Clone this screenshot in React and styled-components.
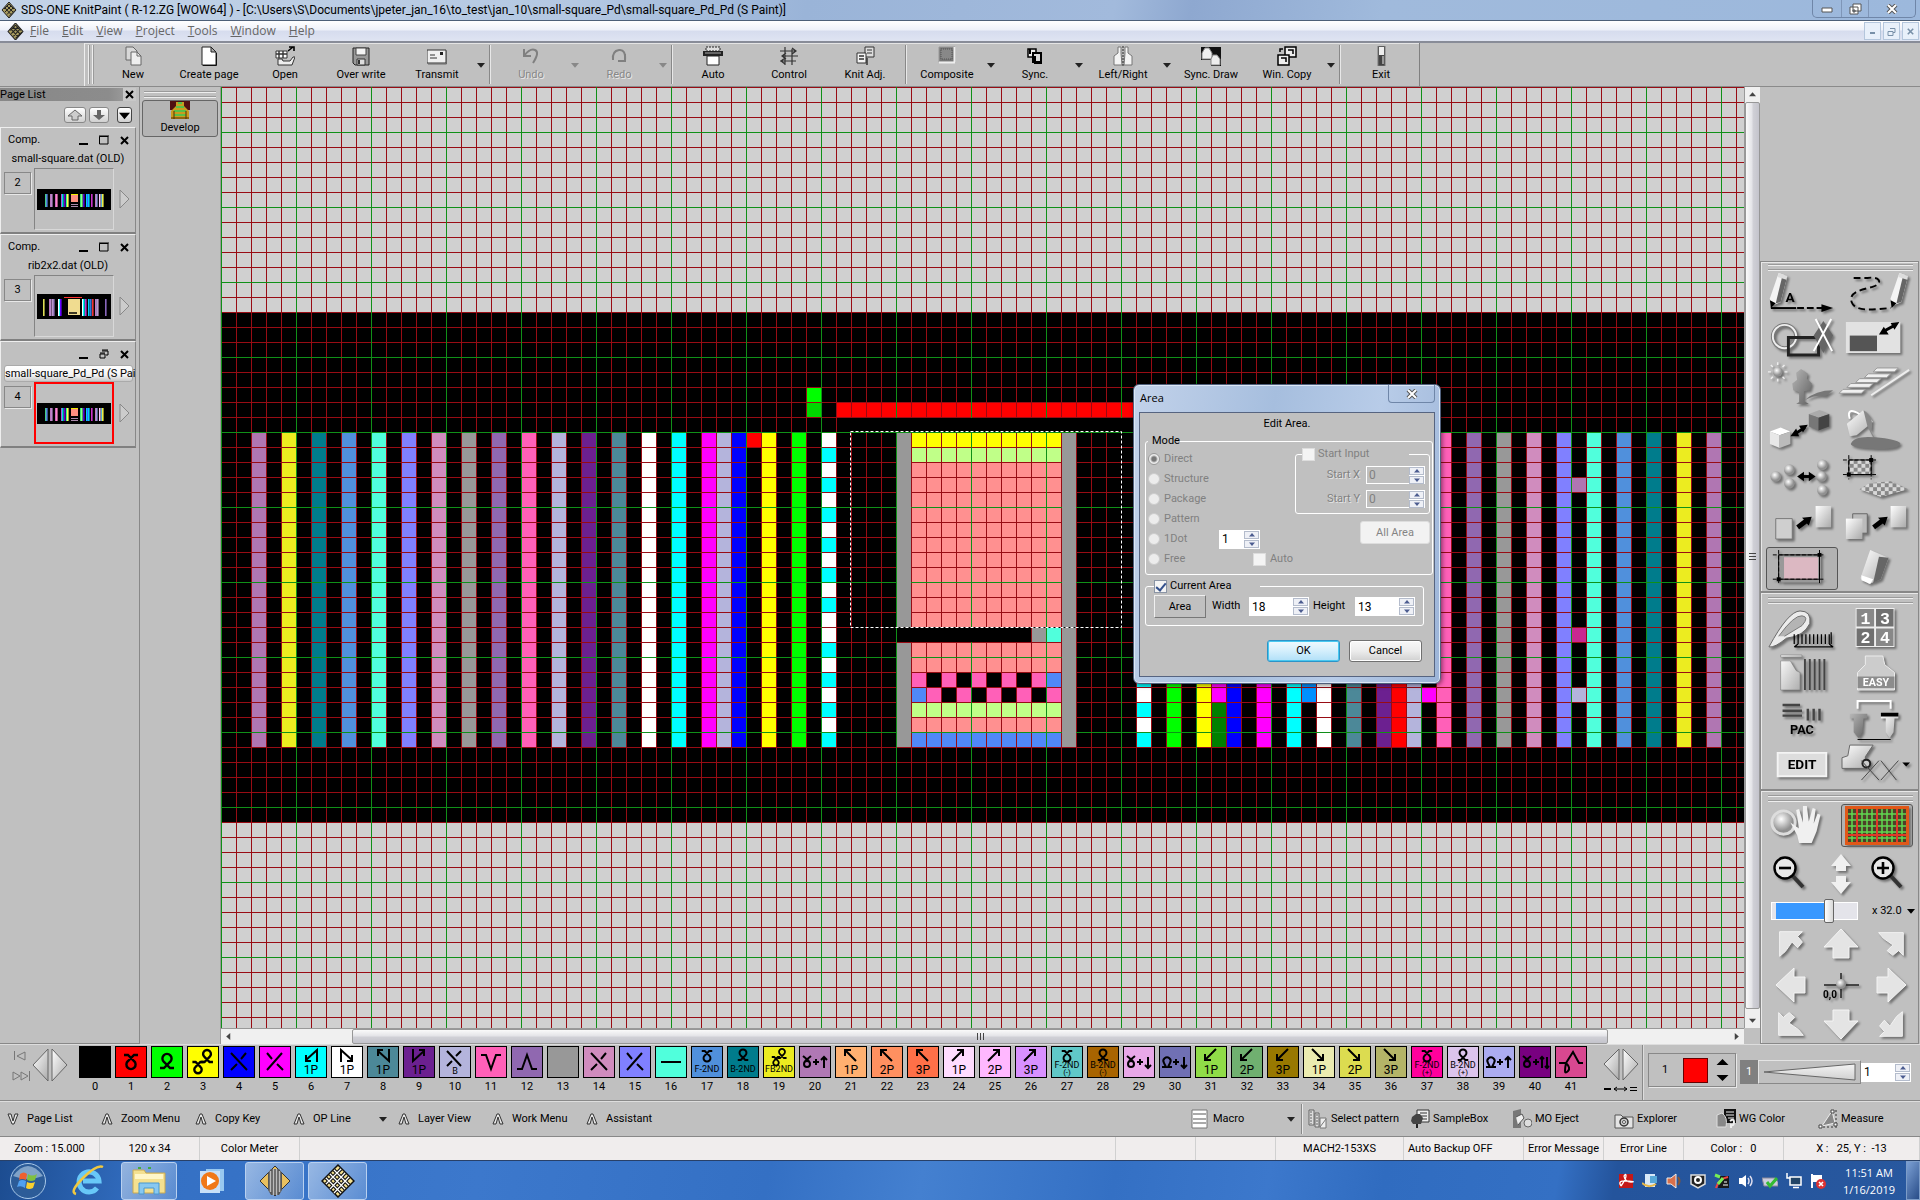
import React from "react";
import styled, { createGlobalStyle, css } from "styled-components";

const Global = createGlobalStyle`
  * { box-sizing: border-box; }
  html, body { margin: 0; padding: 0; }
  body { background: #c0c0c0; color: #000; font: 11px/14px Roboto, "Liberation Sans", sans-serif; overflow: hidden; }
  button, input { font: inherit; color: inherit; margin: 0; padding: 0; }
  button { background: none; border: 0; cursor: default; white-space: nowrap; }
  svg { display: block; }
`;

/* ---------- shell ---------- */
const Shell = styled.div`
  display: flex;
  flex-direction: column;
  min-height: 100vh;
`;
const TitleBar = styled.header`
  display: flex;
  height: 21px;
  padding-left: 1px;
  gap: 4px;
  align-items: center;
  background: linear-gradient(100deg, #c3d3e8 0, #b4c8e2 30%, #9ab4d8 42%, #a2badc 58%, #8ea8d0 62%, #a0badc 72%, #9cb8dc 100%);
  border-bottom: 1px solid #4d6078;
`;
const TitleText = styled.h1`
  margin: 0;
  font: 12px/18px Roboto, "Open Sans", sans-serif;
  white-space: nowrap;
  flex: 1;
`;
const WindowButtons = styled.div`
  display: flex;
  align-self: flex-start;
  margin-right: 4px;
  height: 18px;
  border: 1px solid #6f86a8;
  border-top: 0;
  border-radius: 0 0 5px 5px;
`;
const WindowButton = styled.button`
  width: ${(p) => p.$w}px;
  display: grid;
  place-items: center;
  & + & { border-left: 1px solid #7f96b8; }
`;
const MenuBar = styled.nav`
  display: flex;
  align-items: center;
  height: 22px;
  padding-left: 7px;
  background: linear-gradient(#fff, #eef1f9 45%, #d6dcee 50%, #dfe4f2);
  border-bottom: 2px solid #888c98;
`;
const MenuItem = styled.button`
  font: 12px/18px "Open Sans", sans-serif;
  color: #666;
  padding: 0 7px 0 6px;
`;
const MdiButtons = styled.div`
  display: flex;
  gap: 2px;
  margin-left: auto;
  margin-right: 1px;
`;
const MdiButton = styled.button`
  width: 17px;
  height: 18px;
  display: grid;
  place-items: center;
  border: 1px solid #b4c6dc;
  background: #e8f0fa;
`;

/* ---------- toolbar ---------- */
const ToolbarRow = styled.div`
  height: 44px;
  padding-left: 84px;
  display: flex;
  background: #c0c0c0;
  border-bottom: 1px solid #8a8a8a;
`;
const Toolbar = styled.div`
  display: flex;
  align-items: stretch;
  border-left: 1px solid #eee;
  border-right: 1px solid #808080;
  box-shadow: inset 0 1px #e4e4e4;
`;
const Grip = styled.span`
  width: 6px;
  margin: 2px 1px 2px 3px;
  border-left: 2px ridge #eee;
  border-right: 2px ridge #eee;
`;
const Tool = styled.button`
  width: 76px;
  padding-top: 3px;
  display: flex;
  flex-direction: column;
  align-items: center;
  gap: 2px;
  line-height: 14px;
  ${(p) => p.$off && css`color: #888; text-shadow: 1px 1px #e8e8e8;`}
`;
const DropArrow = styled.button`
  width: 12px;
  margin-right: ${(p) => p.$after || 0}px;
  display: grid;
  place-items: center;
  color: ${(p) => (p.$off ? "#888" : "#222")};
`;
const Divider = styled.span`
  width: 2px;
  margin: ${(p) => (p.$wide ? "2px 5px 2px 4px" : "2px")};
  border-left: 1px solid #888;
  border-right: 1px solid #e8e8e8;
`;

/* ---------- work area ---------- */
const Work = styled.main`
  flex: 1;
  display: flex;
  min-height: 0;
`;
const PagePanel = styled.aside`
  width: 140px;
  border-right: 1px solid #888;
  border-bottom: 1px solid #888;
  padding: 1px 3px 0 0;
`;
const PageHead = styled.div`
  display: flex;
  height: 13px;
  align-items: center;
  justify-content: space-between;
  background: linear-gradient(90deg, #888, #8c8c8c 80%, #a4a4a4);
  line-height: 13px;
`;
const PageClose = styled.button`
  width: 13px;
  height: 13px;
  display: grid;
  place-items: center;
  background: #c8c8c8;
`;
const PageNav = styled.div`
  display: flex;
  height: 26px;
  padding: 6px 4px 4px 64px;
  gap: 3px;
`;
const PageNavButton = styled.button`
  width: ${(p) => p.$w}px;
  margin-left: ${(p) => (p.$last ? 5 : 0)}px;
  display: grid;
  place-items: center;
  border: 1px solid ${(p) => (p.$last ? "#444" : "#888")};
  border-radius: 3px;
  background: linear-gradient(#fff, #d0d0d0);
`;
const PageCard = styled.section`
  height: 107px;
  padding: 1px 4px;
  border-top: 1px solid #eee;
  border-left: 1px solid #eee;
  border-right: 1px solid #888;
  border-bottom: 2px solid #808080;
`;
const CardBar = styled.div`
  display: flex;
  align-items: center;
  height: 22px;
  padding: 0 2px 0 3px;
  gap: 11px;
  > span { flex: 1; }
`;
const CardName = styled.div`
  height: 17px;
  line-height: 15px;
  text-align: center;
  white-space: nowrap;
  ${(p) => p.$active && css`
    text-align: left;
    margin: 0 -2px 0 -1px;
    border: 1px solid #aaa;
    border-radius: 3px;
    background: linear-gradient(#fff, #f4f4f4 60%, #c8c8c8);
  `}
`;
const CardBody = styled.div`
  display: flex;
  gap: 3px;
  align-items: flex-start;
  margin-left: -1px;
`;
const PageNo = styled.button`
  width: 27px;
  height: 22px;
  margin-top: 4px;
  border: 1px solid #888;
  box-shadow: 1px 1px #e8e8e8;
`;
const Thumb = styled.div`
  width: 80px;
  height: 62px;
  display: grid;
  place-items: center;
  border: ${(p) => (p.$active ? "2px solid #f00" : "1px inset #d8d8d8")};
`;
const Play = styled.button`
  align-self: center;
  padding-left: 2px;
`;
const DevelopPanel = styled.aside`
  width: 81px;
  border-right: 1px solid #999;
  padding: 4px 2px 0;
`;
const HGrip = styled.div`
  height: 7px;
  border-top: 2px groove #eee;
  border-bottom: 2px groove #eee;
  margin: 0 2px ${(p) => p.$after || 0}px;
`;
const DevelopButton = styled.button`
  width: 76px;
  height: 37px;
  display: flex;
  flex-direction: column;
  align-items: center;
  gap: 2px;
  background: #b4b4b4;
  border: 1px solid #666;
  border-radius: 3px;
`;
const CanvasColumn = styled.div`
  flex: 1;
  min-width: 0;
  display: flex;
  flex-direction: column;
`;
const CanvasRow = styled.div`
  flex: 1;
  display: flex;
  min-height: 0;
`;
const Canvas = styled.div`
  position: relative;
  flex: 1;
  overflow: hidden;
  background: #d0d0d0;
  > svg { position: absolute; inset: 0; }
`;
const Scroll = styled.div`
  display: flex;
  flex-direction: ${(p) => (p.$v ? "column" : "row")};
  ${(p) => (p.$v ? "width: 16px;" : "height: 16px; margin-right: 16px;")}
  background: #f0f0f0;
  border: 0 solid #999;
  ${(p) => (p.$v ? "border-left-width: 1px;" : "border-top-width: 1px;")}
`;
const ScrollEnd = styled.button`
  flex: none;
  width: 15px;
  height: 15px;
  display: grid;
  place-items: center;
`;
const ScrollGap = styled.span`flex: ${(p) => p.$n} 1 0;`;
const ScrollThumb = styled.div`
  flex: ${(p) => p.$n} 1 0;
  display: grid;
  place-items: center;
  border: 1px solid #979797;
  border-radius: 2px;
  background: linear-gradient(${(p) => (p.$v ? "90deg" : "180deg")}, #fafafa, #e4e4e8 45%, #d0d0d6 55%, #c4c4cc);
`;

/* ---------- tool palette ---------- */
const ToolPanel = styled.aside`
  width: 160px;
  padding-right: 1px;
  display: flex;
  flex-direction: column;
  justify-content: flex-end;
`;
const ToolSection = styled.section`
  border: 1px solid #888;
  box-shadow: inset 1px 1px #e8e8e8;
  padding: ${(p) => p.$pt}px 3px ${(p) => p.$pb}px 5px;
`;
const ToolGrid = styled.div`
  display: grid;
  grid-template-columns: 72px 72px;
  gap: 3px;
`;
const PaintTool = styled.button`
  height: 43px;
  border: 1px solid ${(p) => (p.$on ? "#555" : "transparent")};
  border-radius: 3px;
  background: ${(p) => (p.$on ? "#b2b2b2" : "none")};
  display: grid;
  place-items: center;
  > svg { filter: drop-shadow(2px 2px 1px #707070); overflow: visible; }
`;
const ZoomRow = styled.div`
  display: grid;
  grid-template-columns: 50px 50px ${(p) => p.$last || 50}px;
  grid-template-rows: 100%;
  align-items: center;
  height: ${(p) => p.$h}px;
`;
const ZoomLine = styled.div`
  display: flex;
  align-items: center;
  height: 24px;
  padding-left: 5px;
  gap: 14px;
`;
const ZoomSlider = styled.input`
  appearance: none;
  flex: none;
  width: 87px;
  height: 18px;
  margin: 0;
  border: 1px solid #fff;
  background: linear-gradient(90deg, #e4e4ea 4px, #3898ff 4px, #3898ff 62%, #e4e4ea 62%);
  &::-webkit-slider-thumb {
    appearance: none;
    width: 10px;
    height: 24px;
    border: 1px solid #666;
    border-radius: 2px;
    background: linear-gradient(90deg, #fff, #d8d8d8);
  }
`;
const ZoomValue = styled.button`
  display: flex;
  align-items: center;
  gap: 5px;
`;

/* ---------- area dialog ---------- */
const Dialog = styled.section`
  position: absolute;
  left: 912px;
  top: 297px;
  width: 308px;
  padding: 0 5px 6px;
  border: 1px solid #50607c;
  border-radius: 6px;
  background: linear-gradient(100deg, #c2d2ea, #a6bede 40%, #b8cce8 70%, #9cb4d8);
  box-shadow: inset 0 0 0 1px #dce8f6, 1px 1px 5px #0008;
`;
const DialogHead = styled.div`
  display: flex;
  justify-content: space-between;
  height: 27px;
  padding-left: 1px;
  h2 { margin: 0; font: 11px/26px "Open Sans", sans-serif; }
`;
const DialogClose = styled.button`
  width: 47px;
  height: 18px;
  display: grid;
  place-items: center;
  border: 1px solid #6f86a8;
  border-top: 0;
  border-radius: 0 0 4px 4px;
`;
const DialogBody = styled.div`
  border: 1px solid #566480;
  background: #c0c0c0;
  padding-bottom: 14px;
`;
const DialogCaption = styled.div`
  text-align: center;
  line-height: 22px;
`;
const Group = styled.fieldset`
  min-width: 0;
  margin: ${(p) => p.$m};
  padding: ${(p) => p.$p};
  border: 1px solid #fff;
  border-radius: 3px;
`;
const Legend = styled.legend`
  display: flex;
  align-items: center;
  gap: 3px;
  width: ${(p) => p.$w};
  height: 12px;
  padding: 0 0 0 ${(p) => p.$pl || 0}px;
  line-height: 12px;
  color: ${(p) => (p.$off ? "#808080" : "#000")};
`;
const ModeColumns = styled.div`
  display: grid;
  grid-template-columns: 1fr 135px;
`;
const Modes = styled.div`padding-top: 2px;`;
const StartColumn = styled.div`padding-top: 1px;`;
const ModeRow = styled.div`
  display: flex;
  align-items: center;
  height: 20px;
  color: #808080;
`;
const ModeLabel = styled.label`
  display: flex;
  align-items: center;
  gap: 4px;
  width: ${(p) => p.$w || 71}px;
`;
const Radio = styled.input`
  appearance: none;
  width: 12px;
  height: 12px;
  margin: 0;
  border-radius: 50%;
  border: 1px solid #ccc;
  background: #ececec;
  &:checked {
    border-color: #999;
    background: radial-gradient(#777 0 2px, #ececec 4px);
  }
`;
const Check = styled.input`
  appearance: none;
  flex: none;
  width: 13px;
  height: 13px;
  margin: 0;
  border: 1px solid ${(p) => (p.disabled ? "#ddd" : "#8a94a4")};
  background: #f4f4f4;
  display: grid;
  place-items: center;
  &:checked::after {
    content: "";
    width: 4px;
    height: 8px;
    border: solid #33508c;
    border-width: 0 2px 2px 0;
    transform: rotate(40deg);
  }
`;
const SpinBox = styled.span`
  display: flex;
  flex: none;
  width: ${(p) => p.$w}px;
  height: ${(p) => p.$h || 19}px;
  border: 1px solid #fff;
  background: ${(p) => (p.$off ? "#c0c0c0" : "#fff")};
  color: ${(p) => (p.$off ? "#808080" : "#000")};
`;
const SpinInput = styled.input`
  flex: 1;
  min-width: 0;
  border: 0;
  padding-left: 2px;
  background: transparent;
  font-size: 12px;
`;
const SpinButtons = styled.span`
  display: flex;
  flex-direction: column;
  width: 15px;
  gap: 1px;
  background: #fff;
`;
const SpinButton = styled.button`
  flex: 1;
  display: grid;
  place-items: center;
  border: 1px solid #b4bccc;
  background: #eef0f6;
  color: #4c5c90;
`;
const StartRow = styled.label`
  display: flex;
  justify-content: flex-end;
  align-items: center;
  gap: 6px;
  color: #808080;
  text-shadow: 1px 1px #e4e4e4;
  & + & { margin-top: 6px; }
`;
const AllArea = styled.button`
  display: block;
  width: 70px;
  height: 23px;
  margin: 7px 0 0 auto;
  border: 1px solid #ddd;
  border-radius: 3px;
  background: #f2f2f2;
  color: #848484;
`;
const AreaRow = styled.div`
  display: flex;
  align-items: center;
`;
const FieldLabel = styled.label`
  width: ${(p) => p.$w}px;
  padding: 0 0 2px ${(p) => p.$pl}px;
  flex: none;
`;
const AreaButton = styled.button`
  width: 52px;
  height: 23px;
  border: 1px solid #f0f0f0;
  border-right-color: #777;
  border-bottom-color: #777;
`;
const DialogActions = styled.div`
  display: flex;
  justify-content: flex-end;
  gap: 9px;
  margin: 14px 12px 0 0;
`;
const ActionButton = styled.button`
  width: 73px;
  height: 22px;
  border: 1px solid ${(p) => (p.$main ? "#2c94c8" : "#707070")};
  border-radius: 3px;
  background: ${(p) => (p.$main ? "linear-gradient(#f0fafe, #d4effc 50%, #b0e0f8)" : "linear-gradient(#f8f8f8, #ececec 50%, #d0d0d0)")};
  box-shadow: inset 0 0 0 1px ${(p) => (p.$main ? "#48c8f0" : "#fff")};
`;

/* ---------- colour palette ---------- */
const PaletteBar = styled.section`
  display: flex;
  height: 58px;
  border-bottom: 2px groove #ddd;
  border-top: 1px solid #ddd;
`;
const PaletteStep = styled.div`
  width: 79px;
  padding: 4px 0 0 12px;
`;
const Swatches = styled.div`
  display: flex;
  gap: 4px;
  padding-top: 1px;
`;
const SwatchButton = styled.button`
  width: 32px;
  display: flex;
  flex-direction: column;
  gap: 2px;
  text-align: center;
  > span { line-height: 14px; }
`;
const Chip = styled.span`
  display: block;
  height: 32px;
  border: 1px solid #000;
  background: ${(p) => p.$c};
`;
const PaletteWidth = styled.div`
  width: 57px;
  padding: 3px 0 0 16px;
  border-right: 2px groove #ddd;
`;
const ColorBox = styled.div`
  display: flex;
  align-items: center;
  justify-content: space-between;
  width: 88px;
  height: 34px;
  margin: 8px 4px;
  padding: 0 6px 0 13px;
  border: 1px solid #888;
  box-shadow: 1px 1px #e8e8e8;
`;
const CurrentColor = styled.span`
  width: 25px;
  height: 25px;
  margin-left: 6px;
  border: 1px solid #600;
  background: #f00;
`;
const PenBox = styled.div`
  display: flex;
  align-items: center;
  height: 24px;
  margin-top: 15px;
  flex: 1;
  padding-right: 9px;
`;
const PenNo = styled.span`
  width: 18px;
  height: 24px;
  line-height: 24px;
  text-align: center;
  color: #fff;
  background: #808080;
`;
const PenWedge = styled.div`
  flex: 1;
  height: 24px;
  display: grid;
  place-items: center;
  border: 1px solid #e4e4e4;
  border-right-color: #888;
  border-bottom-color: #888;
`;

/* ---------- bottom bars ---------- */
const FunctionBar = styled.nav`
  display: flex;
  height: 34px;
  padding-left: 7px;
`;
const FnButton = styled.button`
  display: flex;
  align-items: center;
  gap: ${(p) => p.$gap || 8}px;
  width: ${(p) => p.$w}px;
  text-align: left;
`;
const Spring = styled.span`flex: 1;`;
const StatusBar = styled.footer`
  display: flex;
  height: 25px;
  background: #f0eded;
  border-top: 1px solid #888;
  border-bottom: 1px solid #284068;
`;
const StatusCell = styled.span`
  ${(p) => (p.$w ? `width: ${p.$w}px;` : "flex: 1;")}
  border-right: 1px solid #d0d0d0;
  padding-left: ${(p) => (p.$left ? 4 : 0)}px;
  text-align: ${(p) => (p.$left ? "left" : "center")};
  line-height: 23px;
  white-space: pre;
`;
const Taskbar = styled.div`
  display: flex;
  align-items: center;
  height: 39px;
  color: #fff;
  background: linear-gradient(100deg, #1c4c90 0, #3470c4 8%, #3c78cc 25%, #3470c4 40%, #4480d0 48%, #3470c4 58%, #3c78cc 66%, #306cc0 72%, #3470c4 81%, #24549c 84%, #28589f 100%);
`;
const TaskButton = styled.button`
  width: ${(p) => p.$w}px;
  height: 38px;
  margin-right: ${(p) => p.$mr || 0}px;
  display: grid;
  place-items: center;
  ${(p) => p.$open && css`
    border: 1px solid #b8d0f0;
    border-radius: 3px;
    background: linear-gradient(120deg, #d0e0f4a0, #7ca4dc80);
  `}
`;
const Tray = styled.div`
  display: flex;
  align-items: center;
  margin-left: auto;
`;
const TrayButton = styled.button`
  width: 24px;
  display: grid;
  place-items: center;
`;
const Clock = styled.time`
  width: 76px;
  padding-left: 2px;
  text-align: center;
  font: 11px/17px "Open Sans", sans-serif;
`;
const ShowDesktop = styled.button`
  width: 14px;
  height: 39px;
  border: 1px solid #7c9cc8;
  background: linear-gradient(120deg, #7ca0d4, #284c88);
`;

/* ---------- small glyphs ---------- */
const Tri = ({ d = "down", s = 6, c = "currentColor" }) => (
  <svg width={s} height={s} viewBox="0 0 6 6" fill={c}>
    <path d={{ down: "M0 1.5H6L3 5Z", up: "M0 4.5H6L3 1Z", left: "M4.5 0V6L1 3Z", right: "M1.5 0V6L5 3Z" }[d]} />
  </svg>
);
const Ex = ({ s = 9, c = "#000", w = 2 }) => (
  <svg width={s} height={s} viewBox="0 0 9 9" stroke={c} strokeWidth={w}><path d="M1 1 8 8M8 1 1 8" /></svg>
);
const GripMarks = ({ v }) => (
  <svg width="8" height="8" stroke="#444"><path d={v ? "M0 1.5H7M0 4.5H7M0 7.5H7" : "M1.5 0V7M4.5 0V7M7.5 0V7"} /></svg>
);
const Logo = ({ s = 16 }) => (
  <svg width={s} height={s} viewBox="0 0 32 32">
    <path d="M16 0 30 16 16 32 2 16Z" fill="#a89c60" stroke="#222" strokeWidth="2" />
    <path d="M6 14 16 4M8 20 20 8M12 25 24 12M16 29 28 17M26 14 16 4M24 20 12 8M20 25 8 12" stroke="#222" strokeWidth="2" />
  </svg>
);
const Defs = () => (
  <svg width="0" height="0" style={{ position: "absolute" }} aria-hidden="true">
    <defs>
      <linearGradient id="lt" x1="0" y1="0" x2="1" y2="1"><stop stopColor="#fff" /><stop offset="1" stopColor="#aaa" /></linearGradient>
      <linearGradient id="arrow" x1="0" y1="0" x2="0" y2="1"><stop stopColor="#f4f4f4" /><stop offset="1" stopColor="#d0d0d0" /></linearGradient>
      <linearGradient id="md" x1="0" y1="0" x2="1" y2="1"><stop stopColor="#b8b8b8" /><stop offset="1" stopColor="#606060" /></linearGradient>
      <radialGradient id="ball" cx=".4" cy=".35"><stop stopColor="#fff" /><stop offset="1" stopColor="#909090" /></radialGradient>
      <pattern id="chk" width="8" height="8" patternUnits="userSpaceOnUse"><rect width="8" height="8" fill="#d8d8d8" /><path d="M0 0h4v4H0zM4 4h4v4H4z" fill="#888" /></pattern>
    </defs>
  </svg>
);

const barIcons = {
  New: <><path d="M3 1H10L14 5V14H3Z" fill="#d8d8d8" stroke="#666" /><path d="M8 6H14L18 10V19H8Z" fill="#eee" stroke="#666" /><path d="M14 6V10H18" fill="none" stroke="#666" /></>,
  "Create page": <><path d="M3 1H12L17 6V19H3Z" fill="#fff" stroke="#222" /><path d="M12 1V6H17Z" fill="#aaa" stroke="#222" /><path d="M17.5 7V19.5H4" fill="none" stroke="#111" /></>,
  Open: <><path d="M1 5H12V12H1Z" fill="#fff" stroke="#333" /><path d="M4 5V12M8 5V12M1 8H12" stroke="#333" strokeWidth="1.4" /><path d="M3 19V13H7L8 15H15L18 11H20L17 19Z" fill="#eee" stroke="#333" /><path d="M13 5 18 1M14 1H19V5" fill="none" stroke="#000" strokeWidth="1.6" /></>,
  "Over write": <><path d="M2 2H18V19H4L2 17Z" fill="#999" stroke="#222" /><path d="M5 2H15V9H5Z" fill="#f4f4f4" stroke="#444" /><path d="M6 13H14V19H6Z" fill="#ddd" stroke="#333" /><path d="M8 14V18" stroke="#333" strokeWidth="2" /></>,
  Transmit: <><path d="M0 4H19V17H0Z" fill="#f0f0f0" stroke="#333" /><path d="M3 9H8M3 12H10" stroke="#333" /><path d="M13 6H16V9H13Z" fill="#222" /><path d="M19.5 5V18H1" fill="none" stroke="#666" /></>,
  Undo: <path d="M3 3V10H10M3 10Q9 2 14 4T12 17" fill="none" stroke="#808080" strokeWidth="2" />,
  Redo: <path d="M16 8V15H9M16 15Q17 3 10 4T4 14" fill="none" stroke="#808080" strokeWidth="2" />,
  Auto: <><path d="M3 1H17V5H3Z" fill="#ddd" stroke="#222" strokeDasharray="2 1" /><path d="M0 5H20V10H0Z" fill="#222" /><path d="M2 7H18" stroke="#aaa" /><path d="M4 10H16V19H4Z" fill="#fff" stroke="#222" /></>,
  Control: <path d="M1 5H17M13 2 17 5 13 8M19 10H3M7 7 3 10 7 13M1 15H17M6 12 2 15 6 18M6 1V19M13 3V19" fill="none" stroke="#333" strokeWidth="1.2" />,
  "Knit Adj.": <><path d="M10 1H19V11H10Z" fill="#ddd" stroke="#333" /><path d="M12 4H17M12 7H17" stroke="#333" /><path d="M2 7H11V17H2Z" fill="#f4f4f4" stroke="#333" /><path d="M4 10H9M4 13H9M12 12V19" stroke="#333" strokeWidth="1.5" /></>,
  Composite: <><path d="M2 1H18V16H2Z" fill="#777" stroke="#999" /><path d="M2 16.500H18M17.500 1V16" stroke="#eee" strokeWidth="2" /><path d="M4 3H15V13H4Z" fill="#888" stroke="#555" strokeDasharray="1 1" /></>,
  "Sync.": <><path d="M3 3H11V11H3Z" fill="#eee" stroke="#000" strokeWidth="1.5" /><path d="M5 3V8M8 7H16V16H8Z" fill="#ddd" stroke="#000" strokeWidth="2" /><path d="M10 10V17H17" fill="none" stroke="#000" strokeWidth="2" /></>,
  "Left/Right": <><path d="M5 1H8V7L9 19H1V10L5 7Z" fill="#f4f4f4" stroke="#777" /><path d="M15 1H12V7L11 19H19V10L15 7Z" fill="#f4f4f4" stroke="#777" /><path d="M10 0V20" stroke="#222" strokeDasharray="2 1" /></>,
  "Sync. Draw": <><path d="M0 1H12V12H20V20H10V14H0Z" fill="#111" /><path d="M12 1H20V20H12Z" fill="#111" /><path d="M4 2H8L11 7V13H1V7Z" fill="#eee" stroke="#888" /><path d="M12 9H16L19 13V19H10V13Z" fill="#eee" stroke="#888" /></>,
  "Win. Copy": <><path d="M8 1H19V11H8Z" fill="#eee" stroke="#000" strokeWidth="1.5" /><path d="M1 9H12V19H1Z" fill="#eee" stroke="#000" strokeWidth="1.5" /><path d="M11 4H16V8M4 12H9V16M3 6V3H6" fill="none" stroke="#000" strokeWidth="1.5" /></>,
  Exit: <><path d="M7 0H14V20H7Z" fill="#444" stroke="#777" /><path d="M8 1H13V9H8Z" fill="#eee" /><path d="M12 10V18" stroke="#999" strokeWidth="2" /></>,
};
const toolbarItems = ["New", "Create page", "Open", "Over write", "Transmit>", "|", "Undo>-", "Redo>-", "|", "Auto", "Control", "Knit Adj.", "|", "Composite>", "Sync.>", "Left/Right>", "Sync. Draw", "Win. Copy>", "|", "Exit"];

/* ---------- knit pattern ---------- */
const CELL = 15;
const C = { mauve: "#b076b2", yel: "#ecec20", teal: "#007c8c", sky: "#5090dc", aqua: "#50ffdc", peri: "#8080ff", rose: "#d08cbe", gray: "#989898", vio: "#9068b0", pink: "#ff60b8", lav: "#b4b4dc", pur: "#6c2090", slate: "#4c8898" };
const ROWS = 21;
const bars = [
  [2, C.mauve], [4, C.yel], [6, C.teal], [8, C.sky], [10, C.aqua], [12, C.peri], [14, C.rose], [16, C.gray], [18, C.vio], [20, C.pink], [22, C.lav], [24, C.pur], [26, C.slate], [28, "#fff"], [30, "#0ff"], [32, "#f0f"], [33, C.lav], [34, "#00f"], [36, "#ff0"], [38, "#0f0"],
  [63, "#0f0"], [65, "#ff0"], [66, "#f0f"], [67, "#00f"], [69, "#f0f"], [71, "#0ff"], [73, "#fff"], [75, C.slate], [77, C.pur], [78, "#f00"], [79, C.lav], [81, C.pink], [83, C.vio], [85, C.gray], [87, C.rose], [89, C.peri], [91, C.aqua], [93, C.sky], [95, C.teal], [97, C.yel], [99, C.mauve],
].map(([c, f]) => [c, 0, 1, ROWS, f]);
const blocks = [
  ...bars,
  [35, 0, 1, 1, "#f00"], [39, -3, 1, 1, "#0f0"], [39, -2, 1, 1, "#00d800"], [41, -2, 21, 1, "#f00"],
  [46, 0, 10, 1, "#ff0"], [46, 1, 10, 1, "#c0ff88"], [46, 2, 10, 18, "#ff9090"], [46, 18, 10, 1, "#c0ff88"], [46, 20, 10, 1, "#5088f8"],
  [46, 16, 10, 2, C.pink], [55, 16, 1, 1, "#5088f8"], [46, 17, 1, 1, "#5088f8"],
  [66, 18, 1, 3, "#008000"], [72, 16, 1, 2, "#0090ff"], [80, 17, 1, 1, "#f0f"],
  [90, 3, 1, 1, C.mauve], [90, 13, 1, 1, "#c82890"], [90, 17, 1, 1, C.lav],
];
for (let r = 0; r < ROWS; r++) {
  const white = r < 13 ? r % 2 === 0 : r % 2 === 1;
  [40, 61].forEach((c) => blocks.push([c, r, 1, 1, white ? "#fff" : "#0ff"]));
}
const solids = [
  [45, 0, 1, 13, C.gray], [45, 14, 1, 7, C.gray], [56, 0, 1, 21, C.gray],
  [45, 13, 9, 1, "#000"], [54, 13, 1, 1, C.gray], [55, 13, 1, 1, C.aqua],
  ...[47, 49, 51, 53].map((c) => [c, 16, 1, 1, "#000"]),
  ...[48, 50, 52, 54].map((c) => [c, 17, 1, 1, "#000"]),
];
const KnitPattern = () => (
  <svg width="100%" height="100%">
    <defs>
      <pattern id="grid" width="75" height="75" patternUnits="userSpaceOnUse" patternTransform="translate(0 45)">
        {[1, 2, 3, 4].map((i) => <path key={i} d={`M${i * CELL} 0h1v75h-1zM0 ${i * CELL}h75v1H0z`} fill="#980c14" />)}
        <path d="M0 0h75v1H1v74H0z" fill="#109018" />
      </pattern>
    </defs>
    <rect y="225" width="1800" height="510" />
    <g transform="translate(0 345)">
      {blocks.map(([c, r, w, h, f], i) => <rect key={i} x={c * CELL} y={r * CELL} width={w * CELL} height={h * CELL} fill={f} />)}
    </g>
    <rect width="100%" height="100%" fill="url(#grid)" />
    <g transform="translate(1 346)">
      {solids.map(([c, r, w, h, f], i) => <rect key={i} x={c * CELL} y={r * CELL} width={w * CELL - 1} height={h * CELL - 1} fill={f} />)}
      <rect x={41 * CELL} y={-CELL} width={20 * CELL} height={CELL - 2} />
    </g>
    <rect x="629.5" y="344.5" width="271" height="196" fill="none" stroke="#000" />
    <rect x="629.5" y="344.5" width="271" height="196" fill="none" stroke="#fff" strokeDasharray="3 2" />
  </svg>
);
const thumbSets = {
  a: "8#4c8,9#58d,13#b7b,14#b8c,18#c6b,19#f8c,24#a5d,25#0dd,27#60c,29#3f8,30#ff5,43#3e6,44#8f9,46#50c,49#0cf,50#36f,51#0cf,54#c3c,58#b7b,59#99d,62#fcf,64#5ac,65#ee4",
  b: "6#dd5,12#b7b,13#b8c,15#b9c,16#97b,21#fff,22#3ff,23#60f,45#fff,46#0ff,48#b3c,51#0cf,53#37d,55#e33,58#b7c,59#98b,60#b9c,68#86b",
};
const ThumbArt = ({ set, h }) => (
  <svg width="74" height={h}>
    <rect width="74" height={h} />
    {thumbSets[set].split(",").map((s) => {
      const [x, c] = s.split("#");
      return <rect key={x} x={x} y="5" width="1.6" height={h - 8} fill={"#" + c} />;
    })}
    {set === "b" ? <><rect x="31" y="5" width="12" height="16" fill="#f0dc90" /><path d="M32 19H40" stroke="#000" strokeWidth="1.5" /><path d="M27 3.5H45" stroke="#f33" /></> : <><rect x="34" y="5" width="7" height="8" fill="#ff9080" /><path d="M34 5.5H41" stroke="#ee0" /><path d="M34 15.5H41M34 17.5H41" stroke="#a8a" /></>}
  </svg>
);

/* ---------- stitch symbols ---------- */
const Loop = ({ x = 16, y = 9, k = 1, flip, w = 2.4 }) => (
  <path transform={`translate(${x} ${y}) scale(${k} ${flip ? -k : k})`} d="M-7 0H-3L3 6A4.6 4.6 0 1 1-3 6L3 0H7" fill="none" stroke="#000" strokeWidth={w / k} />
);
const dirs = { ul: "M21 15 10 4M10 10V4H16", ur: "M9 15 20 4M20 10V4H14", dl: "M21 3 10 14M10 8V14H16", dr: "M9 3 20 14M20 8V14H14" };
const Sym = ({ k, t, s }) => (
  <svg width="30" height="30" viewBox="1 1 30 30" fill="none" stroke="#000" strokeWidth="2">
    {k === "loop" && <Loop />}
    {k === "loopB" && <Loop y={22} flip />}
    {k === "fb" && <><Loop x={11} y={16} k={0.8} /><Loop x={20} y={16} k={0.85} flip /></>}
    {k === "fbs" && <><Loop x={13} y={11} k={0.6} w={1.8} /><Loop x={19} y={12} k={0.65} flip w={1.8} /></>}
    {k === "x1" && <path d="M8 7 24 24M23 7 18 13M14 18 8 24" />}
    {k === "x2" && <path d="M23 7 8 24M8 7 13 13M18 18 24 24" />}
    {k === "x3" && <path d="M8 5 22 20M22 5 17 10M13 15 8 20" />}
    {k === "V" && <path d="M6 9H11L16 23 21 9H26" />}
    {k === "A" && <path d="M6 23H11L16 9 21 23H26" />}
    {k === "dash" && <path d="M6 16H26" />}
    {dirs[k] && <path d={dirs[k]} />}
    {k === "sdl" && <path d="M22 16V4L11 14M11 9V15H16" />}
    {k === "sdr" && <path d="M10 16V4L21 14M21 9V15H16" />}
    {k === "sul" && <path d="M22 3V15L11 5M11 10V4H16" />}
    {k === "sur" && <path d="M10 3V15L21 5M21 10V4H16" />}
    {k === "2f" && <Loop y={5} k={0.75} w={2} />}
    {k === "2b" && <Loop y={14} k={0.75} flip w={2} />}
    {(k === "lu" || k === "ld" || k === "lud") && <><path d="M4 10 10 15M12 10 6 15" /><circle cx="8" cy="18" r="3" /></>}
    {(k === "ou" || k === "od") && <path d="M3 21H7L5 17A3.6 3.6 0 1 1 11 17L9 21H13" />}
    {/^(lu|ou|ld|od|lud)$/.test(k) && <path d="M14 16H20M17 13V19" />}
    {(k === "lu" || k === "ou" || k === "lud") && <path d={k === "lud" ? "M23 22V11M21 13 23 11 25 13" : "M25 22V11M22 14 25 11 28 14"} />}
    {(k === "ld" || k === "od") && <path d="M25 11V22M22 19 25 22 28 19" />}
    {k === "lud" && <path d="M28 11V22M26 20 28 22 30 20" />}
    {k === "split" && <path d="M4 17H11L18 6 24 17H28M11 17Q16 22 13 25T10 25 11 17" />}
    {t && <text x="16" y={t.length < 3 ? 28 : s ? 22 : 26} fontSize={t.length === 2 ? 12 : 9} textAnchor="middle" fill="#000" stroke="none">{t}</text>}
    {s && <text x="16" y="29" fontSize="8" textAnchor="middle" fill="#000" stroke="none">{s}</text>}
  </svg>
);
const swatches = [
  ["#000"], ["#f00", "loop"], ["#0f0", "loopB"], ["#ff0", "fb"], ["#00f", "x1"], ["#f0f", "x2"], ["#0ff", "sdl", "1P"], ["#fff", "sdr", "1P"], ["#4c8898", "sul", "1P"], ["#6c2090", "sur", "1P"],
  ["#b4b4dc", "x3", "B"], ["#ff60b8", "V"], ["#9068b0", "A"], ["#989898"], ["#d08cbe", "x1"], ["#8080ff", "x2"], ["#50ffdc", "dash"], ["#5090dc", "2f", "F-2ND"], ["#007c8c", "2b", "B-2ND"], ["#ecec20", "fbs", "FB2ND"],
  ["#b078b4", "lu"], ["#ffb070", "ul", "1P"], ["#ff9060", "ul", "2P"], ["#ff7048", "ul", "3P"], ["#ffdcff", "ur", "1P"], ["#ffb8ff", "ur", "2P"], ["#d890ff", "ur", "3P"], ["#60c8c8", "2f", "F-2ND", "(-)"], ["#a86400", "2b", "B-2ND", "(-)"],
  ["#e8a8e8", "ld"], ["#7070b4", "od"], ["#90dc48", "dl", "1P"], ["#70b070", "dl", "2P"], ["#987800", "dl", "3P"], ["#ececb0", "dr", "1P"], ["#dcdc50", "dr", "2P"], ["#b4b468", "dr", "3P"],
  ["#ff009c", "2f", "F-2ND", "(+)"], ["#dcc4ec", "2b", "B-2ND", "(+)"], ["#acacf0", "ou"], ["#780080", "lud"], ["#d84890", "split"],
];

/* ---------- painting tool icons (72 x 42 drawings) ---------- */
const Pencil = ({ x = 0 }) => <g transform={`translate(${x} 0)`}><path d="M12 1 21 4 14 31 4 35 3 27Z" fill="#f4f4f4" /><path d="M16 3 21 4 14 31 9 32Z" fill="#666" /><path d="M12 1 21 4 20 8 11 5Z" fill="#ddd" /><path d="M4 37 3 29 9 32Z" /></g>;
const sel = (x, y, w, h) => <><path d={`M${x - 6} ${y}H${x + w + 6}M${x - 6} ${y + h}H${x + w + 6}M${x} ${y - 5}V${y + h + 5}M${x + w} ${y - 5}V${y + h + 5}`} stroke="#000" strokeDasharray="4 2" /><rect x={x} y={y} width={w} height={h} fill="none" stroke="#000" /><path d={`M${x - 2} ${y + h - 2}h4v4h-4zM${x + w - 2} ${y - 2}h4v4h-4z`} /></>;
const Cube = ({ x, y, dark }) => <g transform={`translate(${x} ${y})`}><path d="M0 4 11 0 21 4 10 8Z" fill={dark ? "#aaa" : "#fff"} /><path d="M0 4 10 8V21L0 17Z" fill={dark ? "#777" : "#e8e8e8"} /><path d="M21 4 10 8V21L21 17Z" fill={dark ? "#444" : "#bbb"} /></g>;
const tools1 = [
  ["Line", <><Pencil /><text x="19" y="31" fontSize="14" fontWeight="700">A</text><path d="M4 37H30" stroke="#000" strokeWidth="2" /><path d="M31 37H58" stroke="#000" strokeWidth="2" strokeDasharray="7 3" /><path d="M56 33 68 37 56 41Z" /></>],
  ["Freehand", <><Pencil x={47} /><path d="M12 6H26C40 4 42 12 32 15S6 20 10 31 35 38 50 37" fill="none" stroke="#000" strokeWidth="2" strokeDasharray="7 4" /></>],
  ["Shapes", <><circle cx="18" cy="19" r="12" fill="none" stroke="#777" strokeWidth="4" /><circle cx="18" cy="19" r="12" fill="none" stroke="#eee" strokeWidth="2" /><path d="M22 20H53V38H22Z" fill="none" stroke="#222" strokeWidth="3" /><path d="M58 3 68 18 58 36 48 18Z" fill="#666" /><path d="M50 1 67 34M66 1 48 34" stroke="#fff" strokeWidth="2" /></>],
  ["Resize", <><path d="M4 4H60V36H4Z" fill="#e2e2e2" /><path d="M8 18H36V34H8Z" fill="#555" /><path d="M42 14 55 7" stroke="#000" strokeWidth="3" /><path d="M38 17 43 9 48 17ZM59 4 50 5 54 12Z" /></>],
  ["Scenery", <><circle cx="11" cy="8" r="5" fill="url(#ball)" /><path d="M11-2V1M11 15V18M1 8H4M18 8H21M4 1 6 3M16 13 18 15M18 1 16 3M6 13 4 15" stroke="#eee" strokeWidth="1.5" /><path d="M35 5 42 10 41 15 46 20 44 27 38 28V38L43 41H30L33 39V29L27 27 26 20 31 16 30 9Z" fill="url(#md)" /><path d="M39 37Q50 27 68 27L60 33Q50 31 39 37" fill="#777" /></>],
  ["Steps", <><path d="M36 4H58L54 8H32ZM27 10H50L46 14H23ZM18 15H40L36 19H14ZM9 20H32L28 24H5ZM1 26H24L20 30H-3Z" fill="#f0f0f0" stroke="#999" /><path d="M30 32 69 6" stroke="#eee" strokeWidth="2" /></>],
  ["Replace colour", <><Cube x={3} y={18} /><Cube x={43} y={0} dark /><path d="M28 25 39 18" stroke="#000" strokeWidth="3" /><path d="M24 27 30 19 33 27ZM42 15 33 16 37 23Z" /></>],
  ["Fill", <><path d="M5 14 22 0 32 12 15 26 8 27Z" fill="url(#lt)" /><path d="M22 0Q34 8 30 22L38 36 34 32 26 16Z" fill="#888" /><path d="M9 35Q12 26 34 28T60 34Q58 41 34 40T9 35" fill="#777" /><path d="M8 9Q4-4 18 4" fill="none" stroke="#fff" strokeWidth="2" /></>],
  ["Rearrange", <>{[[9, 21], [23, 14], [23, 28], [57, 9], [56, 21], [57, 35]].map(([x, y]) => <circle key={x + "" + y} cx={x} cy={y} r="5.5" fill="url(#ball)" />)}<path d="M36 21H46" stroke="#000" strokeWidth="3" /><path d="M31 21 38 16V26ZM50 21 43 16V26Z" /></>],
  ["Transform area", <><rect x="7" y="4" width="23" height="15" fill="url(#chk)" />{sel(7, 4, 23, 15)}<path d="M28 28 50 26 68 34 40 42 18 34Z" fill="url(#chk)" /></>],
  ["Move", <><path d="M9 17H26V38H9Z" fill="#cfcfcf" stroke="#777" /><path d="M50 4H66V26H50Z" fill="url(#lt)" /><path d="M30 24 38 18 36 16 46 15 43 24 41 22 33 28Z" /></>],
  ["Copy", <><path d="M11 12H26V32H11Z" fill="#bbb" stroke="#666" /><path d="M4 17H21V38H4Z" fill="url(#lt)" /><path d="M50 4H66V26H50Z" fill="url(#lt)" /><path d="M31 24 39 18 37 16 47 15 44 24 42 22 34 28Z" /></>],
  ["Area", <><path d="M16 8H54V34H16Z" fill="#dcb8c2" stroke="#999" strokeWidth="3" />{sel(12, 7, 42, 25)}</>, true],
  ["Eraser", <><path d="M29 2 48 10 40 32 28 37 19 31Z" fill="url(#lt)" /><path d="M48 10 40 32 32 36 38 9Z" fill="#666" /><path d="M20 28 32 32 29 37 20 33Z" fill="#fff" /></>],
];
const tools2 = [
  ["Needle", <><path d="M2 41Q22 4 34 4T44 17Q38 30 20 32Q8 42 2 41Z" fill="#ececec" stroke="#666" /><path d="M12 30Q28 8 36 9T36 19L18 30" fill="#b4b4b4" stroke="#777" /><path d="M28 38V28M32 38V28M36 38V28M40 38V28M44 38V28M48 38V28M52 38V28M56 38V28M60 38V28M64 38V28M66 38V26M28 41H68M32 38 28 41M64 38 68 41" stroke="#000" strokeWidth="1.3" /></>],
  ["Numbers", <><path d="M14 1H54V41H14Z" fill="#eee" /><path d="M15 2H33V20H15ZM35 22H53V40H35Z" fill="#888" /><path d="M35 2H53V20H35ZM15 22H33V40H15Z" fill="#707070" /><g fill="#fff" fontSize="17" fontWeight="700" fontFamily="Liberation Mono, monospace"><text x="19" y="17">1</text><text x="39" y="17">3</text><text x="19" y="37">2</text><text x="39" y="37">4</text></g></>],
  ["Garment rib", <><path d="M14 2H36V4H14ZM14 8H24L30 18 34 20V38H14Z" fill="url(#lt)" stroke="#777" strokeWidth=".6" /><path d="M39 6V38M44 6V38M49 6V38M54 6V38M59 6V38" stroke="#444" strokeWidth="2" /></>],
  ["Easy", <><path d="M24 3H42L44 12 54 20V38H16V20L24 12Z" fill="#ccc" stroke="#eee" /><path d="M16 24H54V36H16Z" fill="#8c8c8c" /><text x="35" y="34" fontSize="11" fontWeight="700" textAnchor="middle" fill="#fff">EASY</text></>],
  ["Package", <><path d="M16 6H34M16 12H36M16 17H36M42 22V10M48 22V10M54 22V10" stroke="#444" strokeWidth="2.5" /><text x="36" y="36" fontSize="13" fontWeight="700" textAnchor="middle">PAC</text></>],
  ["Tools", <><path d="M16 10V2H50V10" fill="none" stroke="#fff" strokeWidth="2" /><path d="M8 15H26V20H22L21 34 17 40 12 34V20H8Z" fill="url(#md)" /><path d="M40 15H58V20H54L53 34 49 40 45 34V20H40Z" fill="url(#lt)" /><path d="M40 14H58V18H40ZM16 41H50V42H16Z" /></>],
  ["Edit", <><path d="M11 8H61V32H11Z" fill="#ddd" stroke="#f4f4f4" strokeWidth="2" /><text x="36" y="25" fontSize="14" fontWeight="700" textAnchor="middle">EDIT</text></>],
  ["Roll", <><path d="M8 0H32L24 12V24H0V13L6 11Z" fill="url(#lt)" stroke="#666" /><circle cx="25" cy="19" r="4" fill="#ccc" stroke="#222" strokeWidth="2" /><path d="M20 36 38 16M20 16 38 36M40 36 58 16M40 16 56 36" stroke="#444" /><path d="M62 18H70L66 22Z" /></>],
];
const bigArrow = "M20 3 37 21H28V32H12V21H3Z";
const cornerArrow = "M3 3H27L22 8 27 14 22 20 16 14 9 24 3 29Z";
const NavArrow = ({ r = 0, corner }) => (
  <svg width="40" height="36" viewBox={corner ? "-5 -3 40 38" : "0 0 40 36"}>
    <g transform={corner ? `rotate(${r} 15 16)` : `rotate(${r} 20 18)`}><path d={corner ? cornerArrow : bigArrow} fill="#e4e4e4" stroke="#f4f4f4" /></g>
  </svg>
);
const Magnifier = ({ plus }) => (
  <svg width="44" height="38" viewBox="0 0 44 38"><path d="M22 20 34 33" stroke="#333" strokeWidth="4" /><circle cx="16" cy="14" r="10.5" fill="#e8e8e8" stroke="#000" strokeWidth="2.4" /><path d={plus ? "M10 14H22M16 8V20" : "M10 14H22"} stroke="#000" strokeWidth="2.6" /></svg>
);
const Diamond = () => (
  <svg width="37" height="34" viewBox="0 0 37 34"><path d="M16 1V32L1 16Z" fill="url(#lt)" stroke="#666" /><path d="M20 1V32L35 16Z" fill="url(#lt)" stroke="#666" /></svg>
);

const Spin = ({ id, value, w, h, off }) => (
  <SpinBox $w={w} $h={h} $off={off}>
    <SpinInput id={id} aria-label={id} defaultValue={value} disabled={off} />
    <SpinButtons>
      <SpinButton aria-label="Increase"><Tri d="up" s={6} /></SpinButton>
      <SpinButton aria-label="Decrease"><Tri s={6} /></SpinButton>
    </SpinButtons>
  </SpinBox>
);
const GlassX = () => (
  <svg width="12" height="10"><path d="M2 1 10 9M10 1 2 9" stroke="#555" strokeWidth="4" /><path d="M2 1 10 9M10 1 2 9" stroke="#fff" strokeWidth="2" /></svg>
);

const AreaDialog = () => (
  <Dialog role="dialog" aria-label="Area">
    <DialogHead><h2>Area</h2><DialogClose aria-label="Close"><GlassX /></DialogClose></DialogHead>
    <DialogBody>
      <DialogCaption>Edit Area.</DialogCaption>
      <Group $m="0 1px 0 5px" $p="0 5px 5px 2px">
        <Legend $w="32px" $pl={4}>Mode</Legend>
        <ModeColumns>
          <Modes>
            {["Direct", "Structure", "Package", "Pattern", "1Dot", "Free"].map((m) => (
              <ModeRow key={m}>
                <ModeLabel $w={m === "Free" ? 105 : 71}><Radio type="radio" name="mode" defaultChecked={m === "Direct"} disabled />{m}</ModeLabel>
                {m === "1Dot" && <Spin id="Dot size" value="1" w={41} />}
                {m === "Free" && <ModeLabel $w={42}><Check type="checkbox" disabled />Auto</ModeLabel>}
              </ModeRow>
            ))}
          </Modes>
          <StartColumn>
            <Group $m="0" $p="6px 4px 5px 6px">
              <Legend $w="107px" $off><Check type="checkbox" disabled id="start" /><label htmlFor="start">Start Input</label></Legend>
              <StartRow>Start X<Spin id="Start X" value="0" w={59} h={18} off /></StartRow>
              <StartRow>Start Y<Spin id="Start Y" value="0" w={59} h={18} off /></StartRow>
            </Group>
            <AllArea disabled>All Area</AllArea>
          </StartColumn>
        </ModeColumns>
      </Group>
      <Group $m="5px 10px 0 5px" $p="3px 8px 7px">
        <Legend $w="106px"><Check type="checkbox" defaultChecked id="cur" /><label htmlFor="cur">Current Area</label></Legend>
        <AreaRow>
          <AreaButton>Area</AreaButton>
          <FieldLabel $w={43} $pl={6} htmlFor="Width">Width</FieldLabel><Spin id="Width" value="18" w={60} />
          <FieldLabel $w={46} $pl={4} htmlFor="Height">Height</FieldLabel><Spin id="Height" value="13" w={60} />
        </AreaRow>
      </Group>
      <DialogActions><ActionButton $main>OK</ActionButton><ActionButton>Cancel</ActionButton></DialogActions>
    </DialogBody>
  </Dialog>
);

const Caret = ({ down }) => (
  <svg width="12" height="12" viewBox="0 0 12 12"><path d={down ? "M1 1H4L6 8 8 1H11L7 11H5Z" : "M1 11H4L6 4 8 11H11L7 1H5Z"} fill="#e8e8e8" stroke="#333" /></svg>
);
const pages = [
  { n: 2, title: "Comp.", name: "small-square.dat (OLD)", set: "a", h: 21 },
  { n: 3, title: "Comp.", name: "rib2x2.dat (OLD)", set: "b", h: 25 },
  { n: 4, title: "", name: "small-square_Pd_Pd (S Pai", set: "a", h: 21, active: true },
];
const bottomLinks = [
  ["Select pattern", <><path d="M1 1H6V16H1ZM7 4H11V18H7Z" fill="#ddd" stroke="#666" /><path d="M3 2V15M9 5V17" stroke="#666" strokeDasharray="2 1" /><path d="M12 9H18V19H12Z" fill="#eee" stroke="#777" /><path d="M12 18 18 10" stroke="#777" /></>],
  ["SampleBox", <><path d="M7 1H19V13H7Z" fill="#eee" stroke="#333" /><path d="M10 4H17M11 7H17M12 10H17" stroke="#333" /><path d="M2 8 6 5H10L13 9 11 15H3L1 12Z" fill="#444" /><path d="M7 15V19" stroke="#222" strokeWidth="2" /></>],
  ["MO Eject", <><path d="M1 2 9 0V19H1Z" fill="#777" /><path d="M4 8 10 5 12 9 6 16" fill="#eee" stroke="#555" /><circle cx="16" cy="14" r="4" fill="#ddd" stroke="#666" /></>],
  ["Explorer", <><path d="M1 6H7L9 8H19V19H1Z" fill="#e4e4e4" stroke="#555" /><circle cx="10" cy="13" r="4" fill="#ccc" stroke="#333" strokeWidth="1.5" /><circle cx="10" cy="13" r="1.5" fill="#fff" stroke="#555" /></>],
  ["WG Color", <><path d="M8 0H20V14H8Z" fill="#111" /><path d="M10 3H18M10 6H18M12 9H18" stroke="#eee" /><path d="M1 18V6L6 4Q12 8 10 18Z" fill="#888" stroke="#ddd" /><path d="M14 12Q18 9 18 13T15 16V19" fill="none" stroke="#eee" strokeWidth="2" /></>],
  ["Measure", <><path d="M4 17 14 2 17 14Z" fill="#888" stroke="#eee" /><path d="M1 18H19M18 1V16" stroke="#333" strokeDasharray="2 2" /><path d="M1 16h3v3H1zM13 1h3v3h-3zM16 14h3v3h-3z" fill="#fff" stroke="#444" /></>],
];
const trayIcons = [
  <><path d="M1 1H15V15H1Z" fill="#c41818" /><path d="M3 13Q8 6 8 3T6 3Q7 9 13 9T9 8 3 13" fill="none" stroke="#fff" strokeWidth="1.3" /></>,
  <><path d="M3 1H13V14H3Z" fill="#d8e8f8" /><path d="M8 3H15V10H8Z" fill="#58a8d8" /><path d="M0 10Q6 16 14 11" fill="none" stroke="#e8b848" strokeWidth="2" /></>,
  <><path d="M1 5H5L10 1V15L5 11H1Z" fill="#d8704c" stroke="#eee" /><path d="M12 4Q15 8 12 12" stroke="#853" strokeWidth="2" fill="none" /></>,
  <><path d="M1 2H15V11L8 15 1 11Z" fill="#222" stroke="#ddd" strokeWidth="1.5" /><circle cx="8" cy="7" r="3" fill="none" stroke="#fff" strokeWidth="2" /></>,
  <><path d="M6 3H15V15H4Z" fill="#181818" /><path d="M2 15Q4 6 14 4" fill="none" stroke="#e44" strokeWidth="2" /><path d="M1 2 6 4M4 11 9 5" stroke="#7e5" strokeWidth="3" /><path d="M9 12H14M10 9H13" stroke="#fff" /></>,
  <><path d="M1 5H4L8 2V14L4 11H1Z" fill="#fff" /><path d="M10 5Q12 8 10 11M12 3Q16 8 12 13" stroke="#dde" fill="none" strokeWidth="1.5" /></>,
  <><path d="M0 5H13L16 9V13H2Z" fill="#ccd" stroke="#889" /><path d="M5 9 8 13 15 5" stroke="#3b3" strokeWidth="3" fill="none" /></>,
  <><path d="M4 4H15V12H4Z" fill="#246" stroke="#fff" strokeWidth="1.5" /><path d="M1 0V5H4M7 14.5H13" stroke="#fff" strokeWidth="1.5" fill="none" /></>,
  <><path d="M2 1V15" stroke="#fff" strokeWidth="2" /><path d="M3 2H12V9H3Z" fill="#fff" /><circle cx="11" cy="11" r="5" fill="#d33" /><path d="M9 9 13 13M13 9 9 13" stroke="#fff" strokeWidth="1.6" /></>,
];

export default function App() {
  return (
    <Shell>
      <Global />
      <Defs />
      <TitleBar>
        <Logo />
        <TitleText>{"SDS-ONE KnitPaint ( R-12.ZG [WOW64] ) - [C:\\Users\\S\\Documents\\jpeter_jan_16\\to_test\\jan_10\\small-square_Pd\\small-square_Pd_Pd (S Paint)]"}</TitleText>
        <WindowButtons>
          <WindowButton $w={28} aria-label="Minimize"><svg width="12" height="8"><path d="M1 3H11V7H1Z" fill="#fff" stroke="#555" /></svg></WindowButton>
          <WindowButton $w={27} aria-label="Restore"><svg width="13" height="12"><path d="M4 1H12V8H4ZM1 4H9V11H1Z" fill="#fff" stroke="#555" /><path d="M4 7H6V9H4Z" fill="#89a" stroke="#555" /></svg></WindowButton>
          <WindowButton $w={47} aria-label="Close"><GlassX /></WindowButton>
        </WindowButtons>
      </TitleBar>
      <MenuBar>
        <Logo s={17} />
        {["File", "Edit", "View", "Project", "Tools", "Window", "Help"].map((m) => <MenuItem key={m}><u>{m[0]}</u>{m.slice(1)}</MenuItem>)}
        <MdiButtons>
          <MdiButton aria-label="Minimize page"><svg width="8" height="8"><path d="M1 6H6" stroke="#7890a8" strokeWidth="2" /></svg></MdiButton>
          <MdiButton aria-label="Restore page"><svg width="9" height="9" fill="none" stroke="#7890a8"><path d="M3 1.5H8V5.5H6M1 4.5H6V8.5H1Z" /></svg></MdiButton>
          <MdiButton aria-label="Close page"><Ex s={7} c="#7890a8" /></MdiButton>
        </MdiButtons>
      </MenuBar>
      <ToolbarRow>
        <Toolbar>
          <Grip />
          {toolbarItems.map((t, i) => {
            if (t === "|") return <Divider key={i} />;
            const name = t.replace(/>-?$/, "");
            const off = t.endsWith("-");
            return (
              <React.Fragment key={i}>
                <Tool $off={off}><svg width="20" height="20">{barIcons[name]}</svg>{name}</Tool>
                {t.includes(">") && <DropArrow $off={off} aria-label={name + " options"}><Tri s={8} /></DropArrow>}
              </React.Fragment>
            );
          })}
        </Toolbar>
      </ToolbarRow>

      <Work>
        <PagePanel>
          <PageHead>Page List<PageClose aria-label="Close list"><Ex /></PageClose></PageHead>
          <PageNav>
            <PageNavButton $w={22} aria-label="Up"><svg width="16" height="12"><path d="M8 1 15 7H11V11H5V7H1Z" fill="#ccc" stroke="#666" /></svg></PageNavButton>
            <PageNavButton $w={21} aria-label="Down"><svg width="16" height="12"><path d="M8 11 14 6H10V1H6V6H2Z" fill="#666" /></svg></PageNavButton>
            <PageNavButton $w={15} $last aria-label="Menu"><Tri s={11} c="#000" /></PageNavButton>
          </PageNav>
          {pages.map((p) => (
            <PageCard key={p.n}>
              <CardBar>
                <span>{p.title}</span>
                <svg width="9" height="9"><path d="M0 8H9" stroke="#000" strokeWidth="2" /></svg>
                <svg width="10" height="10" fill="none" stroke="#000">{p.active ? <path d="M3 2H9V6H7M1 5H6V9H1ZM3 1H9M1 4H6" /> : <path d="M.5 1.5H9V9H.5ZM0 1H10" />}</svg>
                <Ex />
              </CardBar>
              <CardName $active={p.active}>{p.name}</CardName>
              <CardBody>
                <PageNo>{p.n}</PageNo>
                <Thumb $active={p.active}><ThumbArt set={p.set} h={p.h} /></Thumb>
                <Play aria-label="Open page"><svg width="12" height="22"><path d="M1 2V20L10 11Z" fill="#ccc" stroke="#888" /></svg></Play>
              </CardBody>
            </PageCard>
          ))}
        </PagePanel>
        <DevelopPanel>
          <HGrip $after={2} />
          <DevelopButton>
            <svg width="20" height="18"><path d="M0 0H20V9H0Z" fill="#501010" /><path d="M6 1H14V5L19 10V18H1V10L6 5Z" fill="#c89c20" /><path d="M8 2H12M6 6H14M4 10H16M4 14H16" stroke="#3c5" strokeWidth="1.5" /><path d="M4 10V18M16 10V18M1 17H19" stroke="#530" /></svg>
            Develop
          </DevelopButton>
        </DevelopPanel>
        <CanvasColumn>
          <CanvasRow>
            <Canvas><KnitPattern /><AreaDialog /></Canvas>
            <Scroll $v>
              <ScrollEnd aria-label="Scroll up"><Tri d="up" s={7} c="#444" /></ScrollEnd>
              <ScrollThumb $v $n={904}><GripMarks v /></ScrollThumb>
              <ScrollGap $n={4} />
              <ScrollEnd aria-label="Scroll down"><Tri s={7} c="#444" /></ScrollEnd>
            </Scroll>
          </CanvasRow>
          <Scroll>
            <ScrollEnd aria-label="Scroll left"><Tri d="left" s={7} c="#444" /></ScrollEnd>
            <ScrollGap $n={116} /><ScrollThumb $n={1256}><GripMarks /></ScrollThumb><ScrollGap $n={121} />
            <ScrollEnd aria-label="Scroll right"><Tri d="right" s={7} c="#444" /></ScrollEnd>
          </Scroll>
        </CanvasColumn>
        <ToolPanel>
          <ToolSection $pt={2} $pb={1}>
            <HGrip />
            <ToolGrid>{tools1.map(([n, art, on]) => <PaintTool key={n} $on={on} aria-label={n}><svg width="70" height="41" viewBox="0 0 72 42">{art}</svg></PaintTool>)}</ToolGrid>
          </ToolSection>
          <ToolSection $pt={4} $pb={2}>
            <HGrip $after={2} />
            <ToolGrid>{tools2.map(([n, art]) => <PaintTool key={n} aria-label={n}><svg width="70" height="41" viewBox="0 0 72 42">{art}</svg></PaintTool>)}</ToolGrid>
          </ToolSection>
          <ToolSection $pt={4} $pb={0}>
            <HGrip $after={2} />
            <ToolGrid>
              <PaintTool aria-label="Pan"><svg width="70" height="41" viewBox="0 0 72 42"><circle cx="17" cy="18" r="12" fill="url(#ball)" stroke="#ddd" strokeWidth="3" /><path d="M24 18 33 24 30 5 33 4 37 18 37 1H41L43 17 47 3 50 4 48 19 52 9 55 10 51 27 46 39H33L31 31Z" fill="#f0f0f0" /></svg></PaintTool>
              <PaintTool $on aria-label="Grid"><svg width="64" height="39"><rect width="64" height="39" fill="#e05818" /><rect x="3" y="3" width="58" height="33" fill="#4c4028" /><path d="M3 8H61M3 14H61M3 20H61M3 26H61M3 32H61M7 3V36M17 3V36M22 3V36M27 3V36M37 3V36M42 3V36M47 3V36M57 3V36" stroke="#60d850" strokeWidth="1.500" /><path d="M12 3V36M32 3V36M52 3V36M3 29H61" stroke="#e03828" strokeWidth="2" /></svg></PaintTool>
            </ToolGrid>
            <ZoomRow $h={52} $last={36}>
              <PaintTool aria-label="Zoom out"><Magnifier /></PaintTool>
              <PaintTool aria-label="Fit"><svg width="24" height="42"><path d="M12 1 22 13H17V18H7V13H2ZM12 41 22 29H17V23H7V29H2Z" fill="#f0f0f0" /></svg></PaintTool>
              <PaintTool aria-label="Zoom in"><Magnifier plus /></PaintTool>
            </ZoomRow>
            <ZoomLine><ZoomSlider type="range" aria-label="Zoom" defaultValue={69} /><ZoomValue>x 32.0 <Tri s={8} /></ZoomValue></ZoomLine>
            <ZoomRow $h={42}>
              <PaintTool aria-label="Up left"><NavArrow corner /></PaintTool>
              <PaintTool aria-label="Up"><NavArrow /></PaintTool>
              <PaintTool aria-label="Up right"><NavArrow corner r={90} /></PaintTool>
            </ZoomRow>
            <ZoomRow $h={40}>
              <PaintTool aria-label="Left"><NavArrow r={-90} /></PaintTool>
              <PaintTool aria-label="Origin"><svg width="40" height="36"><path d="M3 18H38M20 6V31" stroke="#222" strokeWidth="1.5" /><circle cx="20" cy="17" r="5" fill="url(#ball)" /><text x="2" y="31" fontSize="10" fontWeight="700">0,0</text></svg></PaintTool>
              <PaintTool aria-label="Right"><NavArrow r={90} /></PaintTool>
            </ZoomRow>
            <ZoomRow $h={38}>
              <PaintTool aria-label="Down left"><NavArrow corner r={-90} /></PaintTool>
              <PaintTool aria-label="Down"><NavArrow r={180} /></PaintTool>
              <PaintTool aria-label="Down right"><NavArrow corner r={180} /></PaintTool>
            </ZoomRow>
          </ToolSection>
        </ToolPanel>
      </Work>

      <PaletteBar>
        <PaletteStep>
          <svg width="58" height="34" fill="none" stroke="#777"><path d="M2.5 2V11M13 3V11L5 7ZM1 23V31L8 27ZM9 23V31L16 27ZM17.5 22V32" /><path d="M36 0V32L21 16Z" fill="url(#lt)" stroke="#666" /><path d="M40 0V32L55 16Z" fill="url(#lt)" stroke="#666" /></svg>
        </PaletteStep>
        <Swatches>
          {swatches.map(([c, k, t, s], i) => <SwatchButton key={i}><Chip $c={c}><Sym k={k} t={t} s={s} /></Chip><span>{i}</span></SwatchButton>)}
        </Swatches>
        <PaletteWidth><Diamond /><svg width="34" height="12" stroke="#000"><path d="M1 7H8" strokeWidth="2" /><path d="M11 7H24M14 5 11 7 14 9M21 5 24 7 21 9" fill="none" /><path d="M27 5.5H34M27 8.5H34" /></svg></PaletteWidth>
        <ColorBox>1<CurrentColor /><svg width="13" height="26"><path d="M6.500 2 12.500 8H.5ZM6.500 24 12.500 18H.5Z" /></svg></ColorBox>
        <PenBox>
          <PenNo>1</PenNo>
          <PenWedge><svg width="94" height="18"><path d="M1 9 92 1V17Z" fill="url(#arrow)" stroke="#666" /></svg></PenWedge>
          <Spin id="Pen width" value="1" w={50} />
        </PenBox>
      </PaletteBar>

      <FunctionBar>
        <FnButton $w={94}><Caret down />Page List</FnButton>
        <FnButton $w={94}><Caret />Zoom Menu</FnButton>
        <FnButton $w={98}><Caret />Copy Key</FnButton>
        <FnButton $w={84}><Caret />OP Line</FnButton>
        <DropArrow $after={9} aria-label="OP Line options"><Tri s={8} /></DropArrow>
        <FnButton $w={94}><Caret />Layer View</FnButton>
        <FnButton $w={94}><Caret />Work Menu</FnButton>
        <FnButton $w={94}><Caret />Assistant</FnButton>
        <Spring />
        <FnButton $w={94} $gap={5}><svg width="17" height="20"><path d="M1 1H16V19H1Z" fill="#fff" stroke="#777" /><path d="M2 5H15M2 10H15M2 14H15" stroke="#aaa" strokeWidth="2" /></svg>Macro</FnButton>
        <DropArrow aria-label="Macro options"><Tri s={8} /></DropArrow>
        <Divider $wide />
        {bottomLinks.map(([n, art]) => <FnButton key={n} $w={102} $gap={3}><svg width="20" height="20">{art}</svg>{n}</FnButton>)}
      </FunctionBar>

      <StatusBar>
        <StatusCell $w={100}>Zoom : 15.000</StatusCell>
        <StatusCell $w={100}>120 x 34</StatusCell>
        <StatusCell $w={100}>Color Meter</StatusCell>
        <StatusCell />
        <StatusCell $w={80} /><StatusCell $w={80} />
        <StatusCell $w={128}>MACH2-153XS</StatusCell>
        <StatusCell $w={120} $left>Auto Backup OFF</StatusCell>
        <StatusCell $w={80}>Error Message</StatusCell>
        <StatusCell $w={80}>Error Line</StatusCell>
        <StatusCell $w={100}>Color :   0</StatusCell>
        <StatusCell $w={136}>X :   25, Y :  -13</StatusCell>
      </StatusBar>

      <Taskbar>
        <TaskButton $w={55} aria-label="Start">
          <svg width="38" height="38"><circle cx="19" cy="19" r="17.500" fill="#2c5c98" stroke="#a8c8e8" /><path d="M4 14Q19-6 34 14Q19 20 4 14" fill="#b8d0e8" opacity=".6" /><path d="M11 12Q15 9 18 12L17 18Q13 16 10 18Z" fill="#f06030" /><path d="M19 12Q23 15 28 12L26 18Q22 20 18 18Z" fill="#80c040" /><path d="M10 19Q13 17 17 19L16 26Q12 23 8 25Z" fill="#50a0f0" /><path d="M18 20Q22 22 26 20L24 26Q20 28 17 26Z" fill="#f8d030" /></svg>
        </TaskButton>
        <TaskButton $w={66} aria-label="Internet Explorer">
          <svg width="34" height="34"><path d="M26 24A10 10 0 1 1 28 17H12" fill="none" stroke="#68c8f8" strokeWidth="5" /><path d="M5 30Q-2 28 12 14T32 3" fill="none" stroke="#f0c840" strokeWidth="2.500" /></svg>
        </TaskButton>
        <TaskButton $w={56} $open $mr={12} aria-label="Windows Explorer">
          <svg width="34" height="32"><path d="M1 5H12L14 8H33V28H1Z" fill="#f4e090" stroke="#c8a850" /><path d="M3 9H31V14H3Z" fill="#fff6c8" /><path d="M7 18H27V29H22V23H12V29H7Z" fill="#88c8f0" stroke="#4898d0" /><path d="M6 3H9M16 3H19" stroke="#4a4" strokeWidth="2" /></svg>
        </TaskButton>
        <TaskButton $w={46} $mr={10} aria-label="Media Player">
          <svg width="28" height="28"><path d="M8 2H26V24H8Z" fill="#98c8f0" /><path d="M2 4H22V26H2Z" fill="#c8e0f8" /><circle cx="12" cy="14" r="9" fill="#f07818" /><path d="M9 9V19L18 14Z" fill="#fff" /></svg>
        </TaskButton>
        <TaskButton $w={59} $open $mr={4} aria-label="SDS-ONE"><svg width="32" height="32"><path d="M16 1 31 16 16 31 1 16Z" fill="#e8c060" stroke="#333" /><path d="M9 8 12 4H20L23 8V25L20 30H12L9 25Z" fill="#555" /><path d="M11.500 6V27M14.500 4V30M17.500 4V30M20.500 6V27" stroke="#bbb" strokeWidth="1.500" /></svg></TaskButton>
        <TaskButton $w={59} $open aria-label="KnitPaint">
          <svg width="34" height="34"><path d="M17 1 33 17 17 33 1 17Z" fill="#f4e090" stroke="#111" strokeWidth="1.500" /><path d="M9 10 24 25M13 6 28 21M5 14 20 29M24 9 9 25M20 5 5 20M28 13 13 29" stroke="#111" strokeWidth="3.500" /><path d="M9 10 24 25M13 6 28 21M5 14 20 29M24 9 9 25M20 5 5 20M28 13 13 29" stroke="#fff" strokeWidth="1.200" /></svg>
        </TaskButton>
        <Tray>
          {trayIcons.map((a, i) => <TrayButton key={i} aria-label={"Tray item " + (i + 1)}><svg width="16" height="16">{a}</svg></TrayButton>)}
          <Clock>11:51 AM<br />1/16/2019</Clock>
          <ShowDesktop aria-label="Show desktop" />
        </Tray>
      </Taskbar>
    </Shell>
  );
}
